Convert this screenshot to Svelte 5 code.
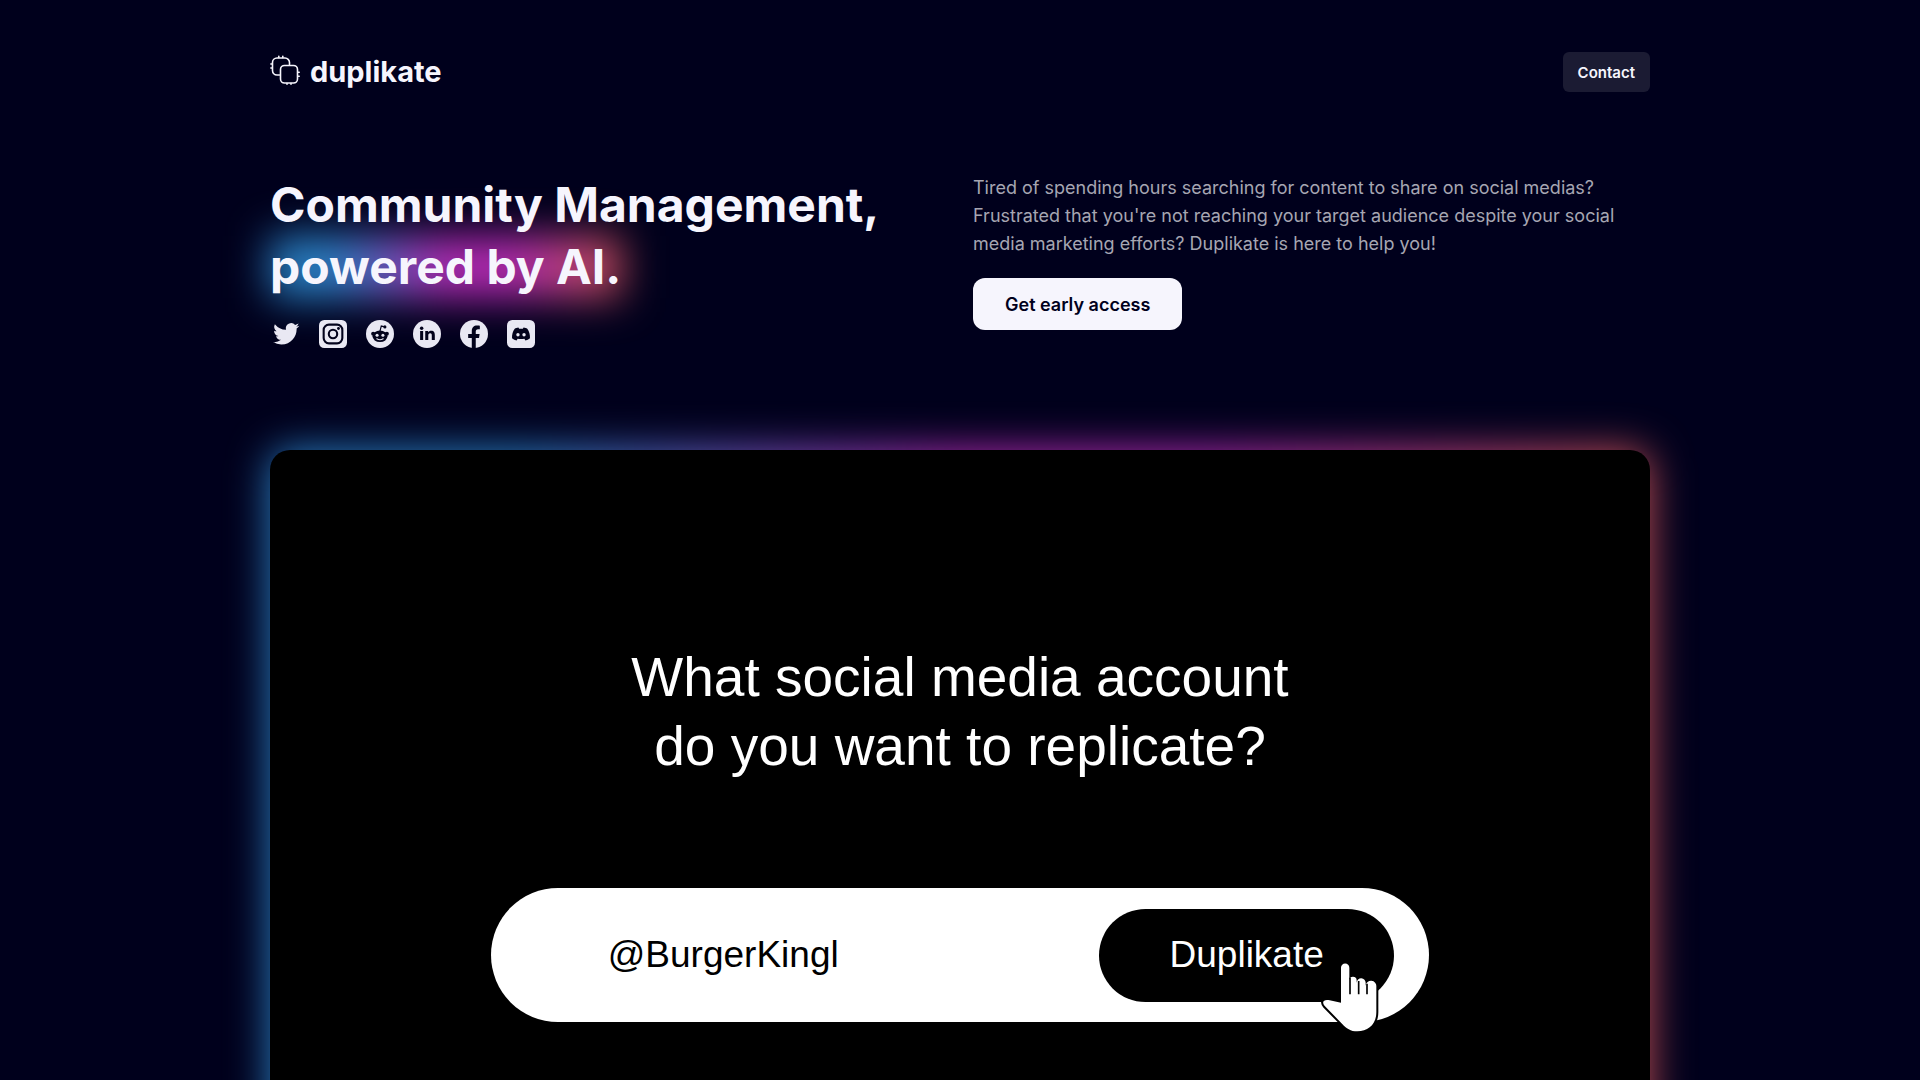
<script>
  let handle = $state('@BurgerKingl');
</script>

<div class="page">
  <div class="container">
    <header class="topbar">
      <a class="brand" href="/">
        <svg class="brand-mark" viewBox="0 0 30 30" aria-hidden="true">
          <g fill="none" stroke="currentColor" stroke-width="1.6" stroke-linecap="round">
            <path d="M9.500 20H7a4.500 4.500 0 0 1-4.500-4.500V7.500A4.500 4.500 0 0 1 7 3h8a4.500 4.500 0 0 1 4.500 4.500v2" />
            <rect x="10.500" y="10.500" width="17" height="17.500" rx="4" />
            <path d="M8.800 2.500V1.200M12.800 2.500V1.200M2 9H.9M2 13H.9M28 17.200h1.200M28 21.200h1.200M17 28.500v.7M21 28.500v.7" />
          </g>
        </svg>
        <span>duplikate</span>
      </a>
      <button class="contact" type="button">Contact</button>
    </header>

    <section class="hero">
      <div class="pitch">
        <h1>Community Management,<br /><span class="glow">powered by AI.</span></h1>
        <nav class="social" aria-label="Social media">
          <a href="#twitter" aria-label="Twitter">
            <svg viewBox="0 0 24 24"><path d="M23.400 4.900a9 9 0 0 1-2.650.73 4.600 4.600 0 0 0 2.030-2.560 9.200 9.200 0 0 1-2.930 1.120 4.620 4.620 0 0 0-7.870 4.210A13.100 13.100 0 0 1 2.470 3.580a4.620 4.620 0 0 0 1.430 6.160 4.600 4.600 0 0 1-2.090-.58v.06a4.620 4.620 0 0 0 3.700 4.530 4.600 4.600 0 0 1-2.080.08 4.620 4.620 0 0 0 4.310 3.200A9.260 9.260 0 0 1 .9 18.950a13.060 13.060 0 0 0 7.080 2.070c8.490 0 13.140-7.040 13.140-13.140l-.02-.6a9.400 9.400 0 0 0 2.300-2.380z" /></svg>
          </a>
          <a href="#instagram" aria-label="Instagram">
            <svg viewBox="0 0 24 24"><rect width="24" height="24" rx="4.500" /><g class="cut-line"><rect x="4" y="4" width="16" height="16" rx="4.500" /><circle cx="12" cy="12" r="3.600" /></g><circle class="cut" cx="16.700" cy="7.300" r="1.200" /></svg>
          </a>
          <a href="#reddit" aria-label="Reddit">
            <svg viewBox="0 0 24 24"><circle cx="12" cy="12" r="12" /><g class="cut"><ellipse cx="12" cy="14" rx="6.400" ry="4.900" /><circle cx="6.100" cy="11.800" r="1.700" /><circle cx="17.900" cy="11.800" r="1.700" /><circle cx="16.200" cy="5.900" r="1.300" /></g><path class="cut-thin" d="M12 9.500l1.100-4.300 3 .7" /><circle cx="9.500" cy="13" r="1.300" /><circle cx="14.500" cy="13" r="1.300" /><path class="smile" d="M9.300 16.100q2.700 1.700 5.400 0" /></svg>
          </a>
          <a href="#linkedin" aria-label="LinkedIn">
            <svg viewBox="0 0 24 24"><circle cx="12" cy="12" r="12" /><g class="cut"><circle cx="7.400" cy="7" r="1.500" /><path d="M6.100 9.500h2.600v7.700H6.100zM10.500 9.500H13v1.100c.5-.8 1.400-1.300 2.600-1.300 2.500 0 3.100 1.600 3.100 3.800v4.100h-2.600v-3.700c0-1.100-.1-2.100-1.400-2.100s-1.600 1-1.600 2.100v3.700h-2.600z" /></g></svg>
          </a>
          <a href="#facebook" aria-label="Facebook">
            <svg viewBox="0 0 24 24"><circle cx="12" cy="12" r="12" /><path class="cut" d="M10.100 24v-8.500H7v-3.400h3.100V9.400c0-3 1.800-4.700 4.500-4.700 1.300 0 2.400.2 2.400.2v3h-1.500c-1.500 0-2 .9-2 1.900v2.300h3.300l-.5 3.400h-2.800V24z" /></svg>
          </a>
          <a href="#discord" aria-label="Discord">
            <svg viewBox="0 0 24 24"><rect width="24" height="24" rx="4.500" /><path class="cut" d="M9.800 6.500c-1.300.2-2.500.6-3.200 1C5 9.800 4.200 12.500 4.300 15.600c1.200 1 2.600 1.600 3.900 1.900l.9-1.500c1.900.5 3.900.5 5.800 0l.9 1.500c1.300-.3 2.700-.9 3.900-1.900.1-3.100-.7-5.800-2.300-8.100-.7-.4-1.900-.8-3.200-1l-.6 1.100q-1.600-.2-3.200 0z" /><circle cx="9.400" cy="12.600" r="1.450" /><circle cx="14.600" cy="12.600" r="1.450" /></svg>
          </a>
        </nav>
      </div>
      <div class="intro">
        <p>Tired of spending hours searching for content to share on social medias? Frustrated that you're not reaching your target audience despite your social media marketing efforts? Duplikate is here to help you!</p>
        <button class="cta" type="button">Get early access</button>
      </div>
    </section>

    <section class="demo">
      <h2>What social media account<br />do you want to replicate?</h2>
      <form class="search" onsubmit={(e) => e.preventDefault()}>
        <input type="text" aria-label="Social media account" bind:value={handle} />
        <button type="submit">Duplikate</button>
        <svg class="pointer" viewBox="774 302 192 216" aria-hidden="true">
          <path d="M843 427V322a12 12 0 0 1 25 0v38a10 10 0 0 1 22 0v7a10 10 0 0 1 27 1v8a11 11 0 0 1 32 3v77c0 36-25 57-57 57-20 0-33-9-46-23l-51-52c-13-15-1-22 14-18z" />
          <path class="finger-gap" d="M870 352v50M896 362v40M921 370v32" />
        </svg>
      </form>
    </section>
  </div>
</div>

<style>
  :global(body) {
    margin: 0;
    background: #00001c;
  }
  .page {
    height: 100vh;
    overflow: hidden;
    background: #00001c;
    color: #f6f5fd;
    font-family: Inter, 'Liberation Sans', sans-serif;
  }
  .container {
    width: min(1380px, calc(100% - 48px));
    margin: 0 auto;
  }
  button,
  input {
    border: 0;
    font-family: inherit;
  }
  button {
    cursor: pointer;
  }
  .topbar {
    display: flex;
    align-items: center;
    justify-content: space-between;
    padding-top: 52px;
  }
  .brand {
    display: flex;
    align-items: center;
    gap: 10px;
    color: inherit;
    font-size: 29px;
    line-height: 40px;
    font-weight: 700;
    text-decoration: none;
  }
  .brand-mark {
    width: 30px;
    height: 30px;
    margin-bottom: 4px;
  }
  .contact {
    height: 40px;
    padding: 0 15px;
    border-radius: 6px;
    background: #1b1b33;
    color: inherit;
    font-size: 15px;
    font-weight: 600;
  }
  .hero {
    display: grid;
    grid-template-columns: 1fr 1fr;
    gap: 26px;
    padding: 82px 0 102px;
  }
  h1,
  h2,
  p {
    margin: 0;
  }
  h1 {
    isolation: isolate;
    font-size: 48px;
    line-height: 62px;
    font-weight: 700;
    white-space: nowrap;
  }
  .glow {
    position: relative;
    display: inline-block;
  }
  .glow::before,
  .demo::before {
    content: '';
    position: absolute;
    inset: 0;
    z-index: -1;
    background: linear-gradient(90deg, #2a80c4 18%, #b02ab0 50%, #b02ab0 68%, #c25050);
    filter: blur(20px);
  }
  .social {
    position: relative;
    display: flex;
    gap: 19px;
    padding: 22px 2px 0;
  }
  .social a {
    color: #e9e8f3;
  }
  .social svg {
    display: block;
    width: 28px;
    height: 28px;
    fill: currentColor;
  }
  .social .cut {
    fill: #03031c;
  }
  .social .cut-line {
    fill: none;
    stroke: #03031c;
    stroke-width: 1.800;
  }
  .social .cut-thin {
    fill: none;
    stroke: #03031c;
    stroke-width: 1;
  }
  .social .smile {
    fill: none;
    stroke: currentColor;
    stroke-width: 1;
    stroke-linecap: round;
  }
  .intro {
    display: flex;
    flex-direction: column;
    align-items: flex-start;
    gap: 20px;
  }
  .intro p {
    color: #a6a6b2;
    font-size: 18px;
    line-height: 28px;
  }
  .cta {
    height: 52px;
    padding: 0 32px;
    border-radius: 12px;
    background: #f6f5fd;
    color: #00001c;
    font-size: 18px;
    font-weight: 600;
  }
  .demo {
    position: relative;
    isolation: isolate;
    box-sizing: border-box;
    aspect-ratio: 16 / 9;
    display: flex;
    flex-direction: column;
    align-items: center;
    gap: 107px;
    padding-top: 193px;
    color: #fff;
    font-family: 'Liberation Sans', Arial, sans-serif;
  }
  .demo::before {
    z-index: -2;
    border-radius: 20px;
  }
  .demo::after {
    content: '';
    position: absolute;
    inset: 0;
    z-index: -1;
    border-radius: 20px;
    background: #000;
  }
  h2 {
    font-size: 55px;
    line-height: 69px;
    font-weight: 400;
    text-align: center;
  }
  .search {
    position: relative;
    box-sizing: border-box;
    display: flex;
    align-items: center;
    width: 68%;
    height: 134px;
    padding: 0 35px 0 117px;
    border-radius: 67px;
    background: #fff;
  }
  .search input {
    flex: 1;
    min-width: 0;
    padding: 0;
    outline: 0;
    background: transparent;
    color: #000;
    font-size: 37px;
  }
  .search button {
    width: 295px;
    height: 93px;
    border-radius: 47px;
    background: #000;
    color: #fff;
    font-size: 37px;
  }
  .pointer {
    position: absolute;
    right: 47px;
    bottom: -11px;
    width: 64px;
    height: 72px;
    fill: #fff;
    stroke: #000;
    stroke-width: 12;
    stroke-linejoin: round;
    paint-order: stroke;
  }
  .pointer .finger-gap {
    fill: none;
    stroke-width: 5;
  }
</style>
